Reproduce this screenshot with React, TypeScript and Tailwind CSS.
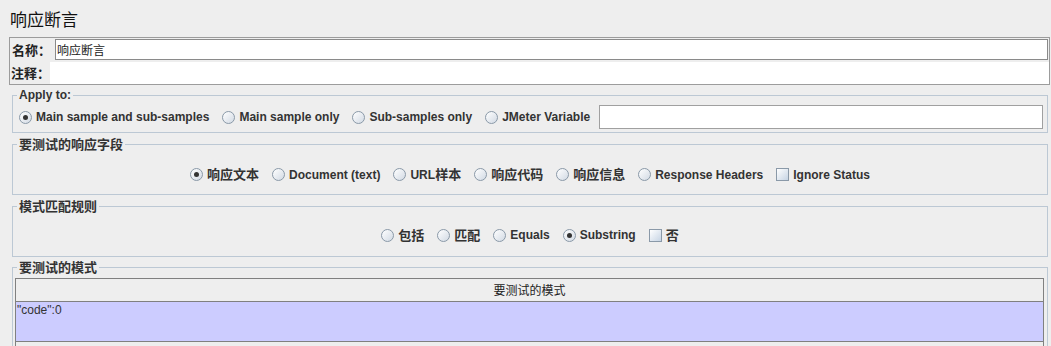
import React from "react";

const FONT = '"Liberation Sans", "Noto Sans CJK SC", sans-serif';
const ZH = '"Noto Sans CJK SC", sans-serif';

function Zh({ children }: { children: React.ReactNode }) {
  return <span className="text-[13px]" style={{ fontFamily: ZH }}>{children}</span>;
}

function Radio({ checked }: { checked?: boolean }) {
  return (
    <span className="w-[13px] h-[13px] shrink-0 rounded-full border border-[#8a99a8] bg-gradient-to-br from-white to-[#d2dae4] flex items-center justify-center">
      {checked && <span className="w-[5px] h-[5px] rounded-full bg-[#333]" />}
    </span>
  );
}

function Check() {
  return <span className="w-[13px] h-[13px] shrink-0 border border-[#8a99a8] bg-gradient-to-br from-white to-[#c6d4e4]" />;
}

function Item({ checked, box, children }: { checked?: boolean; box?: boolean; children: React.ReactNode }) {
  return (
    <span className="flex items-center gap-[4px]">
      {box ? <Check /> : <Radio checked={checked} />}
      <span className="font-bold text-[12px] text-[#333] leading-[16px] whitespace-nowrap">{children}</span>
    </span>
  );
}

function Group({ title, children, className }: { title: React.ReactNode; children: React.ReactNode; className?: string }) {
  return (
    <fieldset className={"border border-[#bcc8d4] ml-[12px] mr-[3px] px-0 " + (className || "")}>
      <legend className="ml-[4px] px-[2px] font-bold text-[12px] text-[#333] leading-[14px]">{title}</legend>
      {children}
    </fieldset>
  );
}

export default function App() {
  return (
    <div className="w-[1051px] h-[346px] overflow-hidden bg-[#eeeeee] text-[#222]" style={{ fontFamily: FONT }}>
      <div className="h-[37px] flex items-center pl-[10px] text-[17px] text-[#111]" style={{ fontFamily: ZH }}>
        响应断言
      </div>

      <div className="ml-[9px] w-[1041px] border border-[#9c9c9c]">
        <div className="flex items-center pt-[1px]">
          <div className="w-[45px] shrink-0 pl-[2px] font-bold text-[13px] text-[#222] whitespace-nowrap" style={{ fontFamily: ZH }}>名称：</div>
          <div className="flex-1 mr-[1px] h-[21px] border border-[#8a8a8a] bg-white flex items-center pl-[1px] text-[12px] text-[#222]" style={{ fontFamily: ZH }}>
            响应断言
          </div>
        </div>
        <div className="flex items-stretch mt-[2px] h-[22px]">
          <div className="w-[40px] shrink-0 pl-[1px] flex items-center font-bold text-[13px] text-[#222] whitespace-nowrap overflow-visible" style={{ fontFamily: ZH }}>注释：</div>
          <div className="flex-1 bg-white" />
        </div>
      </div>

      <Group title="Apply to:" className="mt-[3px]">
        <div className="flex items-center pl-[6px] pr-[4px] pt-[3px] pb-[3px] gap-[13px]">
          <Item checked>Main sample and sub-samples</Item>
          <Item>Main sample only</Item>
          <Item>Sub-samples only</Item>
          <Item>JMeter Variable</Item>
          <div className="flex-1 -ml-[4px] h-[24px] border border-[#a0a0a0] bg-white" />
        </div>
      </Group>

      <Group title={<Zh>要测试的响应字段</Zh>} className="mt-[4px]">
        <div className="flex items-center justify-center gap-[13px] h-[42px] pt-[3px]">
          <Item checked><Zh>响应文本</Zh></Item>
          <Item>Document (text)</Item>
          <Item>URL<Zh>样本</Zh></Item>
          <Item><Zh>响应代码</Zh></Item>
          <Item><Zh>响应信息</Zh></Item>
          <Item>Response Headers</Item>
          <Item box>Ignore Status</Item>
        </div>
      </Group>

      <Group title={<Zh>模式匹配规则</Zh>} className="mt-[4px]">
        <div className="flex items-center justify-center gap-[13px] h-[42px]">
          <Item><Zh>包括</Zh></Item>
          <Item><Zh>匹配</Zh></Item>
          <Item>Equals</Item>
          <Item checked>Substring</Item>
          <Item box><Zh>否</Zh></Item>
        </div>
      </Group>

      <Group title={<Zh>要测试的模式</Zh>} className="mt-[3px]">
        <div className="pt-[3px] pl-[2px] pr-[3px]">
          <div className="border-x border-t border-[#808080]">
            <div className="h-[23px] flex items-center justify-center text-[12px] text-[#222] bg-[#eeeeee] border-b border-[#808080]" style={{ fontFamily: ZH }}>
              要测试的模式
            </div>
            <div className="h-[40px] bg-[#ccccff] border-b border-[#808080] pl-[1px] pt-[1px] text-[12px] text-[#333] leading-[14px]">
              "code":0
            </div>
            <div className="h-[20px] bg-[#eeeeee]" />
          </div>
        </div>
      </Group>
    </div>
  );
}
